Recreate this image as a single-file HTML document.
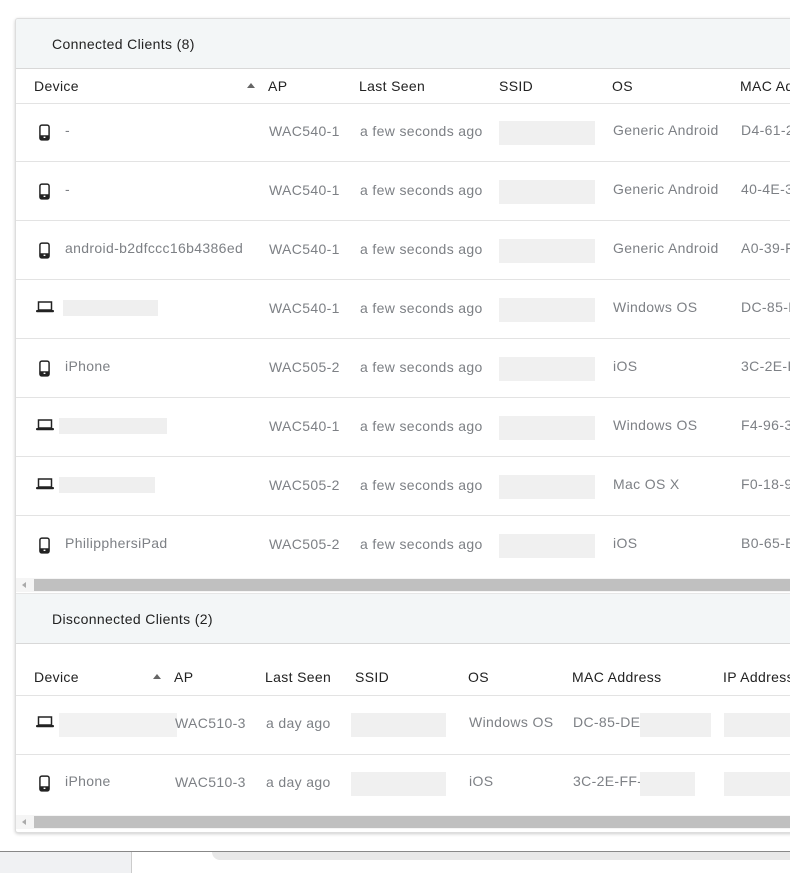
<!DOCTYPE html>
<html><head><style>
body{margin:0;width:790px;height:873px;background:#fff;font-family:"Liberation Sans",sans-serif;font-size:14px;position:relative;overflow:hidden;letter-spacing:.35px}
.a{position:absolute;white-space:nowrap}
.card{position:absolute;left:15px;top:18px;width:790px;height:813px;border:1px solid #ddd;border-radius:3px;box-shadow:0 1px 3px rgba(0,0,0,.2);background:#fff;overflow:hidden}
.hd{position:absolute;left:0;width:800px;height:49px;background:#f3f6f7;border-bottom:1px solid #d8d8d8}
.line{position:absolute;left:0;width:800px;height:1px;background:#e3e3e3}
.th{color:#222}
.td{color:#7d8085}
.bl{position:absolute;background:#ececec}
.sb{position:absolute;left:0;width:800px;height:14px;background:#f5f5f5}
.sb i{position:absolute;left:18px;top:1px;right:0;height:12px;background:#c0c0c0}
.sb b{position:absolute;left:6px;top:4px;border:3px solid transparent;border-right:4px solid #aaa;border-left:0}
</style></head><body>
<div class="card">
<div class="hd" style="top:0"></div>
<div class="a th" style="left:36px;top:17px">Connected Clients (8)</div>
<div class="a th" style="left:18px;top:59px">Device</div>
<div class="a" style="left:231px;top:64px;border:4px solid transparent;border-bottom:5px solid #666;border-top:0"></div>
<div class="a th" style="left:252px;top:59px">AP</div>
<div class="a th" style="left:343px;top:59px">Last Seen</div>
<div class="a th" style="left:483px;top:59px">SSID</div>
<div class="a th" style="left:596px;top:59px">OS</div>
<div class="a th" style="left:724px;top:59px">MAC Address</div>
<div class="line" style="top:84px"></div>
<div id="rows"></div>
<div class="sb" style="top:559px"><b></b><i></i></div>
<div class="hd" style="top:574px;border-top:1px solid #e6e6e6"></div>
<div class="a th" style="left:36px;top:592px">Disconnected Clients (2)</div>
<div class="line" style="top:624px;background:#d8d8d8"></div>
<div class="a th" style="left:18px;top:650px">Device</div>
<div class="a" style="left:137px;top:655px;border:4px solid transparent;border-bottom:5px solid #666;border-top:0"></div>
<div class="a th" style="left:158px;top:650px">AP</div>
<div class="a th" style="left:249px;top:650px">Last Seen</div>
<div class="a th" style="left:339px;top:650px">SSID</div>
<div class="a th" style="left:452px;top:650px">OS</div>
<div class="a th" style="left:556px;top:650px">MAC Address</div>
<div class="a th" style="left:707px;top:650px">IP Address</div>
<div class="line" style="top:676px"></div>
<div class="line" style="top:735px"></div>
<div class="sb" style="top:796px"><b></b><i></i></div>
</div>
<div class="a" style="left:0;top:851px;width:790px;height:1px;background:#888"></div>
<div class="a" style="left:0;top:852px;width:131px;height:21px;background:#f0f1f3;border-right:1px solid #ccc"></div>
<div class="a" style="left:212px;top:852px;width:600px;height:8px;background:#e8e8e8;border-radius:0 0 0 8px"></div>
<script>
const phone='<svg width="11" height="17" viewBox="0 0 12 18"><rect x="1" y="1" width="10" height="16" rx="2" fill="none" stroke="#222" stroke-width="1.6"/><rect x="1" y="12" width="10" height="5" fill="#222"/><rect x="5" y="13.5" width="2" height="1.5" fill="#fff"/></svg>';
const lap='<svg width="18" height="12" viewBox="0 0 18 12"><rect x="2.5" y="1" width="13" height="8" fill="none" stroke="#222" stroke-width="1.5"/><rect x="0" y="9" width="18" height="2.2" rx="1" fill="#222"/></svg>';
const R=[[phone,'-','WAC540-1','Generic Android','D4-61-2'],[phone,'-','WAC540-1','Generic Android','40-4E-3'],[phone,'android-b2dfccc16b4386ed','WAC540-1','Generic Android','A0-39-F'],[lap,'','WAC540-1','Windows OS','DC-85-D',[47,95]],[phone,'iPhone','WAC505-2','iOS','3C-2E-F'],[lap,'','WAC540-1','Windows OS','F4-96-3',[43,108]],[lap,'','WAC505-2','Mac OS X','F0-18-9',[43,96]],[phone,'PhilipphersiPad','WAC505-2','iOS','B0-65-E']];
let h='';
R.forEach((r,i)=>{const t=84+i*59;const c=t+30;
h+=`<div class="a" style="left:${r[0]==phone?23:20}px;top:${c-9}px;line-height:0">${r[0]}</div>`;
if(r[1])h+=`<div class="a td" style="left:49px;top:${c-11}px">${r[1]}</div>`;
if(r[5])h+=`<div class="bl" style="left:${r[5][0]}px;top:${c-10}px;width:${r[5][1]}px;height:16px;background:#efefef"></div>`;
h+=`<div class="a td" style="left:253px;top:${c-10}px">${r[2]}</div><div class="a td" style="left:344px;top:${c-10}px">a few seconds ago</div>`;
h+=`<div class="bl" style="left:483px;top:${c-12}px;width:96px;height:24px;background:#f0f0f0"></div>`;
h+=`<div class="a td" style="left:597px;top:${c-11}px">${r[3]}</div><div class="a td" style="left:725px;top:${c-11}px">${r[4]}</div>`;
if(i<7)h+=`<div class="line" style="top:${t+58}px"></div>`;});
const D=[[lap,'','WAC510-3','Windows OS','DC-85-DE'],[phone,'iPhone','WAC510-3','iOS','3C-2E-FF-']];
D.forEach((r,i)=>{const c=676+i*59+30;
h+=`<div class="a" style="left:${r[0]==phone?23:20}px;top:${c-9}px;line-height:0">${r[0]}</div>`;
if(r[1])h+=`<div class="a td" style="left:49px;top:${c-11}px">${r[1]}</div>`;else h+=`<div class="bl" style="left:43px;top:${c-12}px;width:118px;height:24px;background:#f2f2f2"></div>`;
h+=`<div class="a td" style="left:159px;top:${c-10}px">${r[2]}</div><div class="a td" style="left:250px;top:${c-10}px">a day ago</div>`;
h+=`<div class="bl" style="left:335px;top:${c-12}px;width:95px;height:24px;background:#f0f0f0"></div>`;
h+=`<div class="a td" style="left:453px;top:${c-11}px">${r[3]}</div><div class="a td" style="left:557px;top:${c-11}px">${r[4]}</div>`;
h+=`<div class="bl" style="left:624px;top:${c-12}px;width:${i?55:71}px;height:24px;background:#f0f0f0"></div><div class="bl" style="left:708px;top:${c-12}px;width:90px;height:24px;background:#f0f0f0"></div>`;});
document.getElementById('rows').outerHTML=h;
</script>
</body></html>
